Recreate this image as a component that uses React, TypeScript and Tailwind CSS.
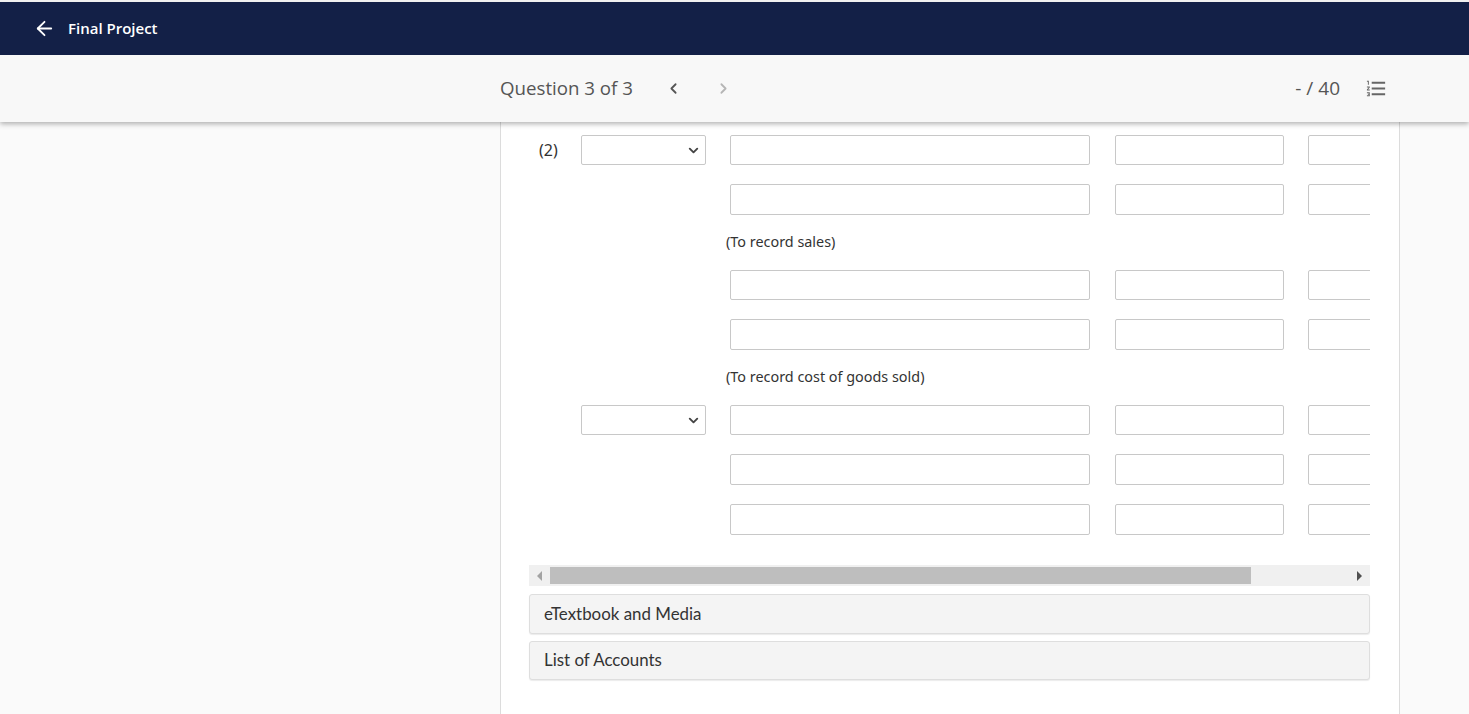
import { ArrowLeft, ChevronDown, ChevronLeft, ChevronRight } from 'lucide-react';
import { MdFormatListNumbered } from 'react-icons/md';

const box = 'h-full rounded-[2px] border border-[#c8c8c8] bg-white shrink-0';

function EntryRow({ label, select, tall, className }: { label?: string; select?: boolean; tall?: boolean; className?: string }) {
  return (
    <div className={`flex ${tall ? 'h-[31px]' : 'h-[30px]'} ${className ?? ''}`}>
      <div className="w-[52px] shrink-0 pl-[10px] pb-[1px] flex items-center font-['Noto_Sans',sans-serif] text-[16px] text-[#333]">{label}</div>
      <div className="w-[125px] shrink-0 mr-[24px]">
        {select && (
          <div className={`${box} w-full flex items-center justify-end pr-[4px]`}>
            <ChevronDown size={15} strokeWidth={3} className="text-[#444]" />
          </div>
        )}
      </div>
      <div className={`${box} w-[360px] mr-[25px]`} />
      <div className={`${box} w-[169px] mr-[24px]`} />
      <div className={`${box} w-[169px]`} />
    </div>
  );
}

function Note({ text }: { text: string }) {
  return (
    <div className="h-[55px] pl-[197px] pt-[17px] font-['Noto_Sans',sans-serif] text-[14.4px] leading-[20px] text-[#333]">{text}</div>
  );
}

function Accordion({ title, className }: { title: string; className?: string }) {
  return (
    <div className={`flex items-center pl-[14px] rounded-[3px] border border-[#dedede] bg-[#f4f4f4] shadow-[0_1px_1px_rgba(0,0,0,0.08)] font-['Lato',sans-serif] text-[16.9px] text-[#333] ${className ?? ''}`}>
      {title}
    </div>
  );
}

export default function App() {
  return (
    <div className="h-[714px] overflow-hidden flex flex-col bg-[#fafafa] font-['Open_Sans',sans-serif]">
      <div className="relative z-10 shrink-0 shadow-[0_2px_5px_rgba(0,0,0,0.3)]">
        <div className="h-[2px] bg-[#f0f0f0]" />
        <div className="h-[53px] bg-[#132047] flex items-center pl-[33px] text-white">
          <ArrowLeft size={23} strokeWidth={1.9} />
          <span className="ml-[12px] text-[15px] font-semibold">Final Project</span>
        </div>
        <div className="h-[67px] bg-[#f8f8f8] flex items-center text-[#555]">
          <span className="ml-[500px] text-[18.7px]">Question 3 of 3</span>
          <ChevronLeft size={17} strokeWidth={2.5} className="ml-[32px]" />
          <ChevronRight size={17} strokeWidth={2.5} className="ml-[33px] text-[#b5b5b5]" />
          <span className="ml-auto text-[19px]">- / 40</span>
          <MdFormatListNumbered size={23} className="ml-[25px] mr-[81px] text-[#666]" />
        </div>
      </div>

      <div className="flex-1 w-[900px] ml-[500px] border-x border-[#dcdcdc] bg-white pl-[28px] pt-[13px]">
        <div className="w-[841px] overflow-hidden">
          <EntryRow label="(2)" select />
          <EntryRow tall className="mt-[19px]" />
          <Note text="(To record sales)" />
          <EntryRow />
          <EntryRow tall className="mt-[19px]" />
          <Note text="(To record cost of goods sold)" />
          <EntryRow select />
          <EntryRow tall className="mt-[19px]" />
          <EntryRow tall className="mt-[19px]" />
        </div>

        <div className="w-[841px] h-[21px] mt-[30px] bg-[#f0f0f0] flex items-center">
          <div className="w-[21px] flex justify-center">
            <div className="border-y-[5px] border-r-[5px] border-y-transparent border-r-[#a3a3a3]" />
          </div>
          <div className="w-[701px] h-[17px] bg-[#bebebe]" />
          <div className="ml-auto w-[21px] flex justify-center">
            <div className="border-y-[5px] border-l-[5px] border-y-transparent border-l-[#505050]" />
          </div>
        </div>

        <div className="w-[841px] mt-[8px]">
          <Accordion title="eTextbook and Media" className="h-[40px]" />
          <Accordion title="List of Accounts" className="h-[39px] mt-[7px] pb-[1px]" />
        </div>
      </div>
    </div>
  );
}
